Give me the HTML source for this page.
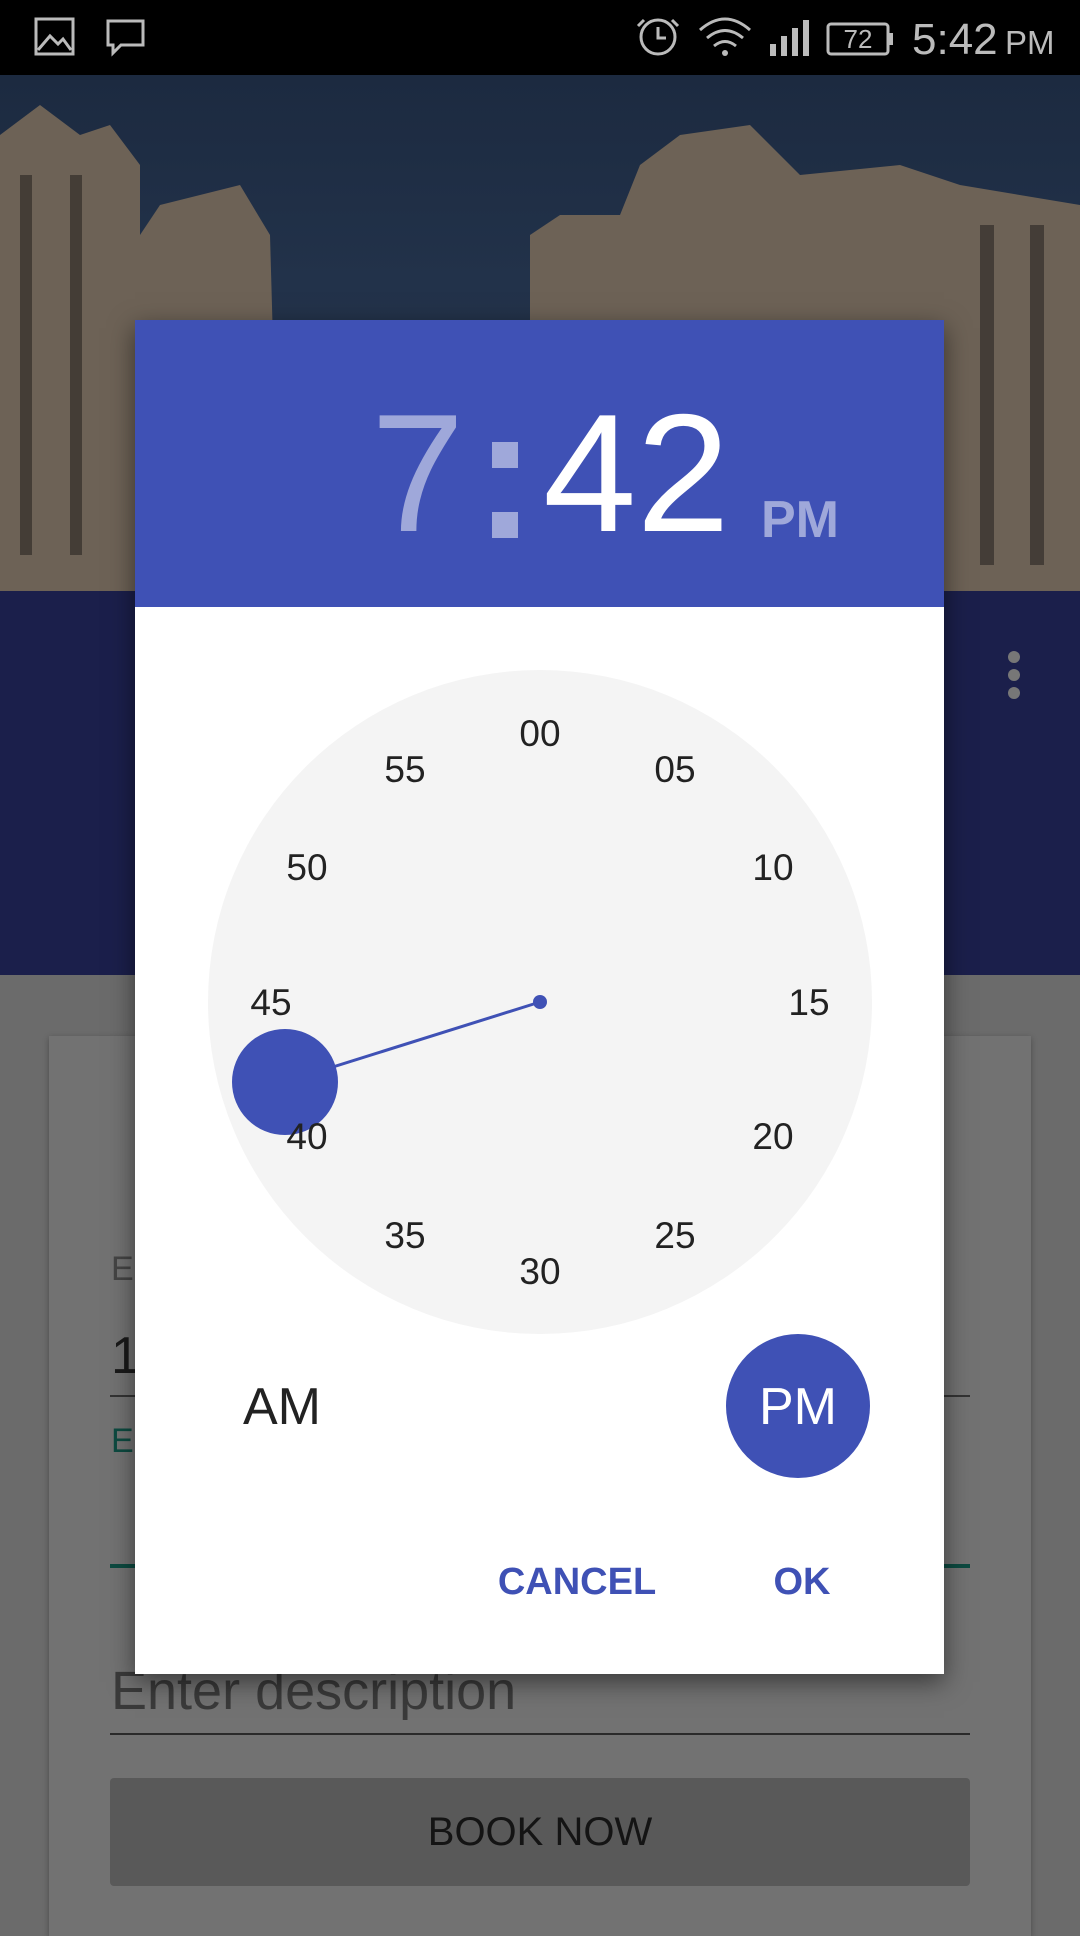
<!DOCTYPE html>
<html><head><meta charset="utf-8"><style>
*{margin:0;padding:0;box-sizing:border-box}
body{width:1080px;height:1920px;overflow:hidden;position:relative;background:#6b6b6b;font-family:"Liberation Sans",sans-serif}
.abs{position:absolute}
</style></head><body>
<div class="abs" style="left:0;top:0;width:1080px;height:75px;background:#000"></div>
<svg class="abs" style="left:0;top:0" width="1080" height="75">
 <g fill="none" stroke="#bbb" stroke-width="3">
  <rect x="36" y="19" width="37" height="35"/>
  <path d="M38 50 L50 36 L58 44 L63 39 L71 50"/>
  <path d="M108 21 h35 v24 h-22 l-8 8 v-8 h-5z"/>
  <circle cx="658" cy="37" r="17"/><path d="M658 27v11h8 M644 20l-6 6 M672 20l6 6"/>
  <path d="M700 30q25-22 50 0 M707 38q18-15 36 0 M714 46q11-9 22 0"/>
  <rect x="828" y="24" width="60" height="30" rx="3"/>
 </g>
 <circle cx="725" cy="53" r="3" fill="#bbb"/>
 <g fill="#bbb"><rect x="770" y="44" width="6" height="12"/><rect x="781" y="36" width="6" height="20"/><rect x="792" y="28" width="6" height="28"/><rect x="803" y="20" width="6" height="36"/><rect x="888" y="33" width="5" height="12"/></g>
 <text x="858" y="48" font-size="26" fill="#bbb" text-anchor="middle" font-family="Liberation Sans">72</text>
 <text x="912" y="54" font-size="44" fill="#bbb" font-family="Liberation Sans">5:42</text>
 <text x="1005" y="54" font-size="33" fill="#bbb" font-family="Liberation Sans">PM</text>
</svg>
<div class="abs" style="left:0;top:75px;width:1080px;height:516px;background:linear-gradient(180deg,#1c2a40 0%,#22324a 40%,#2a3648 100%)"></div>
<svg class="abs" style="left:0;top:75px" width="1080" height="516">
 <g fill="#6d6256">
  <path d="M0 60 L40 30 L80 60 L110 50 L140 90 L140 516 L0 516Z"/>
  <path d="M140 160 L160 130 L200 120 L240 110 L270 160 L280 516 L140 516Z"/>
  <path d="M530 160 L560 140 L620 140 L640 90 L680 60 L750 50 L800 100 L900 90 L960 110 L1080 130 L1080 516 L530 516Z"/>
 </g>
 <g fill="#3a352f" opacity=".8">
  <rect x="20" y="100" width="12" height="380"/><rect x="70" y="100" width="12" height="380"/>
  <rect x="980" y="150" width="14" height="340"/><rect x="1030" y="150" width="14" height="340"/>
 </g>
</svg>
<div class="abs" style="left:0;top:591px;width:1080px;height:384px;background:#1b1f4b"></div>
<div class="abs" style="left:1008px;top:651px;width:12px;height:12px;border-radius:50%;background:#777"></div>
<div class="abs" style="left:1008px;top:669px;width:12px;height:12px;border-radius:50%;background:#777"></div>
<div class="abs" style="left:1008px;top:687px;width:12px;height:12px;border-radius:50%;background:#777"></div>
<div class="abs" style="left:49px;top:1036px;width:982px;height:900px;background:#727272;box-shadow:0 2px 6px rgba(0,0,0,.3)"></div>
<div class="abs" style="left:111px;top:1250px;font-size:34px;color:#444">E</div>
<div class="abs" style="left:111px;top:1326px;font-size:52px;color:#1a1a1a">1</div>
<div class="abs" style="left:110px;top:1395px;width:860px;height:2px;background:#333"></div>
<div class="abs" style="left:111px;top:1422px;font-size:34px;color:#0d4a40">E</div>
<div class="abs" style="left:110px;top:1564px;width:860px;height:4px;background:#0d4a40"></div>
<div class="abs" style="left:111px;top:1660px;font-size:54px;color:#3a3a3a">Enter description</div>
<div class="abs" style="left:110px;top:1733px;width:860px;height:2px;background:#2a2a2a"></div>
<div class="abs" style="left:110px;top:1778px;width:860px;height:108px;background:#595959;border-radius:4px;color:#141414;font-size:40px;text-align:center;line-height:108px">BOOK NOW</div>
<div class="abs" style="left:135px;top:320px;width:809px;height:1354px;background:#fff;box-shadow:0 8px 24px rgba(0,0,0,.5)"></div>
<div class="abs" style="left:135px;top:320px;width:809px;height:287px;background:#3f51b5"></div>
<div class="abs" style="left:371px;top:388px;font-size:168px;line-height:170px;color:#9fa8da">7</div>
<div class="abs" style="left:492px;top:442px;width:26px;height:26px;background:#9fa8da"></div>
<div class="abs" style="left:492px;top:512px;width:26px;height:26px;background:#9fa8da"></div>
<div class="abs" style="left:543px;top:388px;font-size:168px;line-height:170px;color:#fff">42</div>
<div class="abs" style="left:761px;top:490px;font-size:52px;line-height:60px;color:#9fa8da;font-weight:bold">PM</div>
<svg class="abs" style="left:0;top:0" width="1080" height="1920">
 <circle cx="540" cy="1002" r="332" fill="#f4f4f4"/>
 <line x1="540" y1="1002" x2="285" y2="1082" stroke="#3f51b5" stroke-width="3"/>
 <circle cx="540" cy="1002" r="7" fill="#3f51b5"/>
 <circle cx="285" cy="1082" r="53" fill="#3f51b5"/>
 <g font-size="37" fill="#222" text-anchor="middle" font-family="Liberation Sans">
  <text x="540" y="746">00</text><text x="675" y="782">05</text><text x="773" y="880">10</text>
  <text x="809" y="1015">15</text><text x="773" y="1149">20</text><text x="675" y="1248">25</text>
  <text x="540" y="1284">30</text><text x="405" y="1248">35</text><text x="307" y="1149">40</text>
  <text x="271" y="1015">45</text><text x="307" y="880">50</text><text x="405" y="782">55</text>
 </g>
 <text x="282" y="1424" font-size="52" fill="#222" text-anchor="middle" font-family="Liberation Sans">AM</text>
 <circle cx="798" cy="1406" r="72" fill="#3f51b5"/>
 <text x="798" y="1424" font-size="52" fill="#fff" text-anchor="middle" font-family="Liberation Sans">PM</text>
 <g font-size="38" fill="#3f51b5" font-weight="bold" text-anchor="middle" font-family="Liberation Sans">
  <text x="577" y="1594">CANCEL</text><text x="802" y="1594">OK</text>
 </g>
</svg>
</body></html>
